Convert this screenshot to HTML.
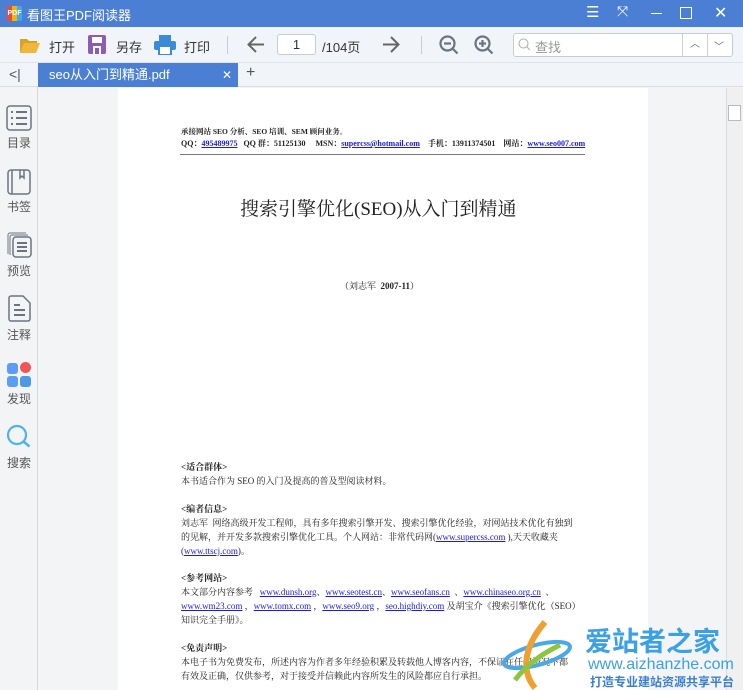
<!DOCTYPE html><html><head><meta charset="utf-8"><style>
*{margin:0;padding:0;box-sizing:border-box}
body{width:743px;height:690px;overflow:hidden;background:#f3f4f6;font-family:"Liberation Sans","Noto Sans CJK SC",sans-serif;position:relative}
.a{position:absolute}
.tb{left:0;top:0;width:743px;height:27px;background:#4a7fd4;color:#fff}
.tool{top:27px;left:0;width:743px;height:36px;background:#f1f4f8;border-bottom:1px solid #dfe3e8;font-size:13px;color:#333}
.tabs{top:63px;left:0;width:743px;height:24px;background:#f1f4f8;border-bottom:1px solid #dcdcdc}
.side{top:87px;left:0;width:38px;height:603px;background:#f3f4f6;border-right:1px solid #d8d8d8}
.sl{left:0;width:38px;text-align:center;font-size:12px;color:#555}
.pg{left:118px;top:88px;width:530px;height:602px;background:#fff;font-family:"Liberation Serif","Noto Serif CJK SC",serif;color:#222}
.pg p{position:absolute;left:63px;font-size:9px;white-space:nowrap;line-height:13px}
u{color:#1a1aee}
.b{font-weight:bold}
</style></head><body>
<div class="a tb">
 <div class="a" style="left:7px;top:6px;width:15px;height:15px;background:linear-gradient(90deg,#e94b3c 33%,#f5b400 33% 66%,#3fa9f5 66%);border-radius:2px;font-size:7px;line-height:15px;color:#fff;text-align:center;font-weight:bold">PDF</div>
 <div class="a" style="left:27px;top:5px;font-size:13px">看图王PDF阅读器</div>
 <div class="a" style="left:586px;top:3px;font-size:15px">☰</div>
 <div class="a" style="left:617px;top:3px;font-size:14px">⤧</div>
 <div class="a" style="left:651px;top:13px;width:11px;height:1px;background:#fff"></div>
 <div class="a" style="left:680px;top:7px;width:12px;height:12px;border:1.5px solid #fff"></div>
 <div class="a" style="left:714px;top:3px;font-size:16px">✕</div>
</div>
<div class="a tool">
 <svg class="a" style="left:19px;top:8px" width="22" height="19"><path d="M1 4h7l2 2h8v2H6L1 18z" fill="#d9a12a"/><path d="M5 8h16l-4 10H1z" fill="#f0b83a"/></svg>
 <div class="a" style="left:49px;top:10px">打开</div>
 <svg class="a" style="left:88px;top:8px" width="18" height="19"><rect x="0" y="0" width="18" height="19" rx="2" fill="#8e5bb5"/><rect x="4" y="2" width="10" height="6" fill="#fff"/><rect x="5" y="11" width="8" height="8" fill="#fff"/><rect x="7" y="13" width="4" height="6" fill="#8e5bb5"/></svg>
 <div class="a" style="left:116px;top:10px">另存</div>
 <svg class="a" style="left:154px;top:8px" width="22" height="20"><rect x="5" y="0" width="12" height="6" fill="#3b8ad8"/><rect x="0" y="6" width="22" height="9" rx="2" fill="#3b8ad8"/><rect x="5" y="11" width="12" height="9" fill="#fff" stroke="#3b8ad8" stroke-width="2"/></svg>
 <div class="a" style="left:184px;top:10px">打印</div>
 <div class="a" style="left:227px;top:9px;width:1px;height:18px;background:#ccc"></div>
 <svg class="a" style="left:247px;top:9px" width="18" height="17"><path d="M17 8.5H2M9 1L1.5 8.5 9 16" stroke="#666" stroke-width="2" fill="none"/></svg>
 <div class="a" style="left:277px;top:7px;width:39px;height:21px;border:1px solid #c8ccd2;border-radius:3px;background:#fff;text-align:center;line-height:19px">1</div>
 <div class="a" style="left:322px;top:10px">/104页</div>
 <svg class="a" style="left:382px;top:9px" width="18" height="17"><path d="M1 8.5h15M9 1l7.5 7.5L9 16" stroke="#666" stroke-width="2" fill="none"/></svg>
 <div class="a" style="left:421px;top:9px;width:1px;height:18px;background:#ccc"></div>
 <svg class="a" style="left:439px;top:8px" width="20" height="20"><circle cx="8.5" cy="8.5" r="7" stroke="#6c7480" stroke-width="2.2" fill="none"/><path d="M5 8.5h7M13.5 13.5l5 5" stroke="#6c7480" stroke-width="2.2"/></svg>
 <svg class="a" style="left:474px;top:8px" width="20" height="20"><circle cx="8.5" cy="8.5" r="7" stroke="#6c7480" stroke-width="2.2" fill="none"/><path d="M5 8.5h7M8.5 5v7M13.5 13.5l5 5" stroke="#6c7480" stroke-width="2.2"/></svg>
 <div class="a" style="left:513px;top:6px;width:220px;height:24px;border:1px solid #c8ccd2;border-radius:3px;background:#fff"></div>
 <svg class="a" style="left:518px;top:11px" width="13" height="14"><circle cx="5.5" cy="5.5" r="4.5" stroke="#aaa" fill="none"/><path d="M9 9l3 3" stroke="#aaa"/></svg>
 <div class="a" style="left:535px;top:10px;color:#999">查找</div>
 <div class="a" style="left:682px;top:7px;width:1px;height:22px;background:#d0d0d0"></div>
 <div class="a" style="left:707px;top:7px;width:1px;height:22px;background:#d0d0d0"></div>
 <div class="a" style="left:690px;top:8px;font-size:10px;color:#666">︿</div>
 <div class="a" style="left:714px;top:11px;font-size:10px;color:#666">﹀</div>
</div>
<div class="a tabs">
 <div class="a" style="left:9px;top:3px;font-size:14px;color:#555">&lt;|</div>
 <div class="a" style="left:38px;top:0;width:200px;height:24px;background:#4a7fd4;color:#fff;font-size:13px;line-height:24px;padding-left:11px">seo从入门到精通.pdf<span style="position:absolute;left:184px;font-size:12px">✕</span></div>
 <div class="a" style="left:246px;top:1px;font-size:16px;color:#555">+</div>
</div>
<div class="a side">
 <svg class="a" style="left:6px;top:18px" width="26" height="26"><rect x="1" y="1" width="24" height="24" rx="3" stroke="#6c7480" stroke-width="1.5" fill="none"/><path d="M5 7h2M10 7h11M5 13h2M10 13h11M5 19h2M10 19h11" stroke="#6c7480" stroke-width="2"/></svg>
 <div class="a sl" style="top:47px">目录</div>
 <svg class="a" style="left:7px;top:82px" width="24" height="26"><rect x="1" y="1" width="22" height="24" rx="3" stroke="#6c7480" stroke-width="1.5" fill="none"/><path d="M5 1v24M13 1v8l2-2 2 2V1" stroke="#6c7480" stroke-width="1.5" fill="none"/></svg>
 <div class="a sl" style="top:111px">书签</div>
 <svg class="a" style="left:6px;top:145px" width="26" height="26"><path d="M2 22V3a2 2 0 0 1 2-2h16M4 23V5a2 2 0 0 1 2-2h16" stroke="#6c7480" stroke-width="1" fill="none"/><rect x="7" y="5" width="18" height="20" rx="3" stroke="#6c7480" stroke-width="1.5" fill="none"/><path d="M11 11h10M11 15h10M11 19h10" stroke="#6c7480" stroke-width="2"/></svg>
 <div class="a sl" style="top:175px">预览</div>
 <svg class="a" style="left:8px;top:208px" width="23" height="27"><path d="M1 3a2 2 0 0 1 2-2h12l7 7v16a2 2 0 0 1-2 2H3a2 2 0 0 1-2-2z" stroke="#6c7480" stroke-width="1.5" fill="none"/><path d="M6 10h6M6 15h11M6 20h11" stroke="#6c7480" stroke-width="2"/></svg>
 <div class="a sl" style="top:239px">注释</div>
 <div class="a" style="left:7px;top:276px;width:11px;height:11px;background:#5b9cf5;border-radius:3px"></div>
 <div class="a" style="left:20px;top:275px;width:11px;height:11px;background:#f25557;border-radius:50%"></div>
 <div class="a" style="left:7px;top:289px;width:11px;height:11px;background:#5b9cf5;border-radius:3px"></div>
 <div class="a" style="left:20px;top:289px;width:11px;height:11px;background:#4a9ae8;border-radius:3px"></div>
 <div class="a sl" style="top:303px">发现</div>
 <svg class="a" style="left:6px;top:337px" width="26" height="26"><circle cx="11" cy="11" r="9" stroke="#4db3f0" stroke-width="2.2" fill="none"/><path d="M17.5 17.5l6 5" stroke="#4db3f0" stroke-width="2.5"/></svg>
 <div class="a sl" style="top:367px">搜索</div>
</div>
<div class="a pg">
 <p class="b" style="top:37px;font-size:7.5px">承接网站 SEO 分析、SEO 培训、SEM 顾问业务。</p>
 <p class="b" style="top:49px;font-size:8px">QQ：<u>495489975</u>&nbsp;&nbsp;&nbsp;QQ 群：51125130&nbsp;&nbsp;&nbsp;&nbsp;&nbsp;MSN：<u>supercss@hotmail.com</u>&nbsp;&nbsp;&nbsp;&nbsp;手机：13911374501&nbsp;&nbsp;&nbsp;&nbsp;网站：<u>www.seo007.com</u></p>
 <div class="a" style="left:62px;top:66px;width:405px;height:1px;background:#777"></div>
 <p style="top:110px;left:122px;font-size:19px;line-height:24px">搜索引擎优化(SEO)从入门到精通</p>
 <p style="top:192px;left:222px">（刘志军&nbsp;&nbsp;<b>2007-11</b>）</p>
 <p class="b" style="top:373px">&lt;适合群体&gt;</p>
 <p style="top:387px">本书适合作为 SEO 的入门及提高的普及型阅读材料。</p>
 <p class="b" style="top:415px">&lt;编者信息&gt;</p>
 <p style="top:429px">刘志军&nbsp;&nbsp;网络高级开发工程师，具有多年搜索引擎开发、搜索引擎优化经验，对网站技术优化有独到</p>
 <p style="top:443px">的见解，并开发多款搜索引擎优化工具。个人网站：非常代码网(<u>www.supercss.com</u>&nbsp;),天天收藏夹</p>
 <p style="top:457px">(<u>www.ttscj.com</u>)。</p>
 <p class="b" style="top:484px">&lt;参考网站&gt;</p>
 <p style="top:498px">本文部分内容参考&nbsp;&nbsp;&nbsp;<u>www.dunsh.org</u>、<u>www.seotest.cn</u>、<u>www.seofans.cn</u>&nbsp;&nbsp;、<u>www.chinaseo.org.cn</u>&nbsp;&nbsp;、</p>
 <p style="top:512px"><u>www.wm23.com</u>&nbsp;，<u>www.tomx.com</u>&nbsp;，<u>www.seo9.org</u>&nbsp;，<u>seo.highdiy.com</u>&nbsp;及胡宝介《搜索引擎优化（SEO）</p>
 <p style="top:526px">知识完全手册》。</p>
 <p class="b" style="top:554px">&lt;免责声明&gt;</p>
 <p style="top:568px">本电子书为免费发布，所述内容为作者多年经验积累及转载他人博客内容，不保证在任何情况下都</p>
 <p style="top:582px">有效及正确，仅供参考，对于接受并信赖此内容所发生的风险都应自行承担。</p>
</div>
<div class="a" style="left:726px;top:88px;width:17px;height:602px;background:#f0f0f0;border-left:1px solid #ddd"></div>
<div class="a" style="left:728px;top:105px;width:13px;height:16px;background:#fff;border:1px solid #bbb"></div>
<div class="a" style="left:585px;top:625px;font-size:27px;font-weight:bold;color:#3aa0e8;font-family:'Noto Sans CJK SC',sans-serif;line-height:30px">爱站者之家</div>
<div class="a" style="left:588px;top:656px;font-size:16px;color:#3aa0e8">www.aizhanzhe.com</div>
<div class="a" style="left:590px;top:673px;font-size:12px;font-weight:bold;color:#3a7fd0">打造专业建站资源共享平台</div>
<svg class="a" style="left:500px;top:620px" width="75" height="70"><ellipse cx="37" cy="35" rx="34" ry="10" stroke="#4aa8e8" stroke-width="4" fill="none" transform="rotate(-15 37 35)"/><path d="M45 2C25 25 20 50 35 68" stroke="#f0a030" stroke-width="6" fill="none"/><path d="M15 60C30 40 50 30 60 25" stroke="#8cc63e" stroke-width="5" fill="none"/></svg>
</body></html>
